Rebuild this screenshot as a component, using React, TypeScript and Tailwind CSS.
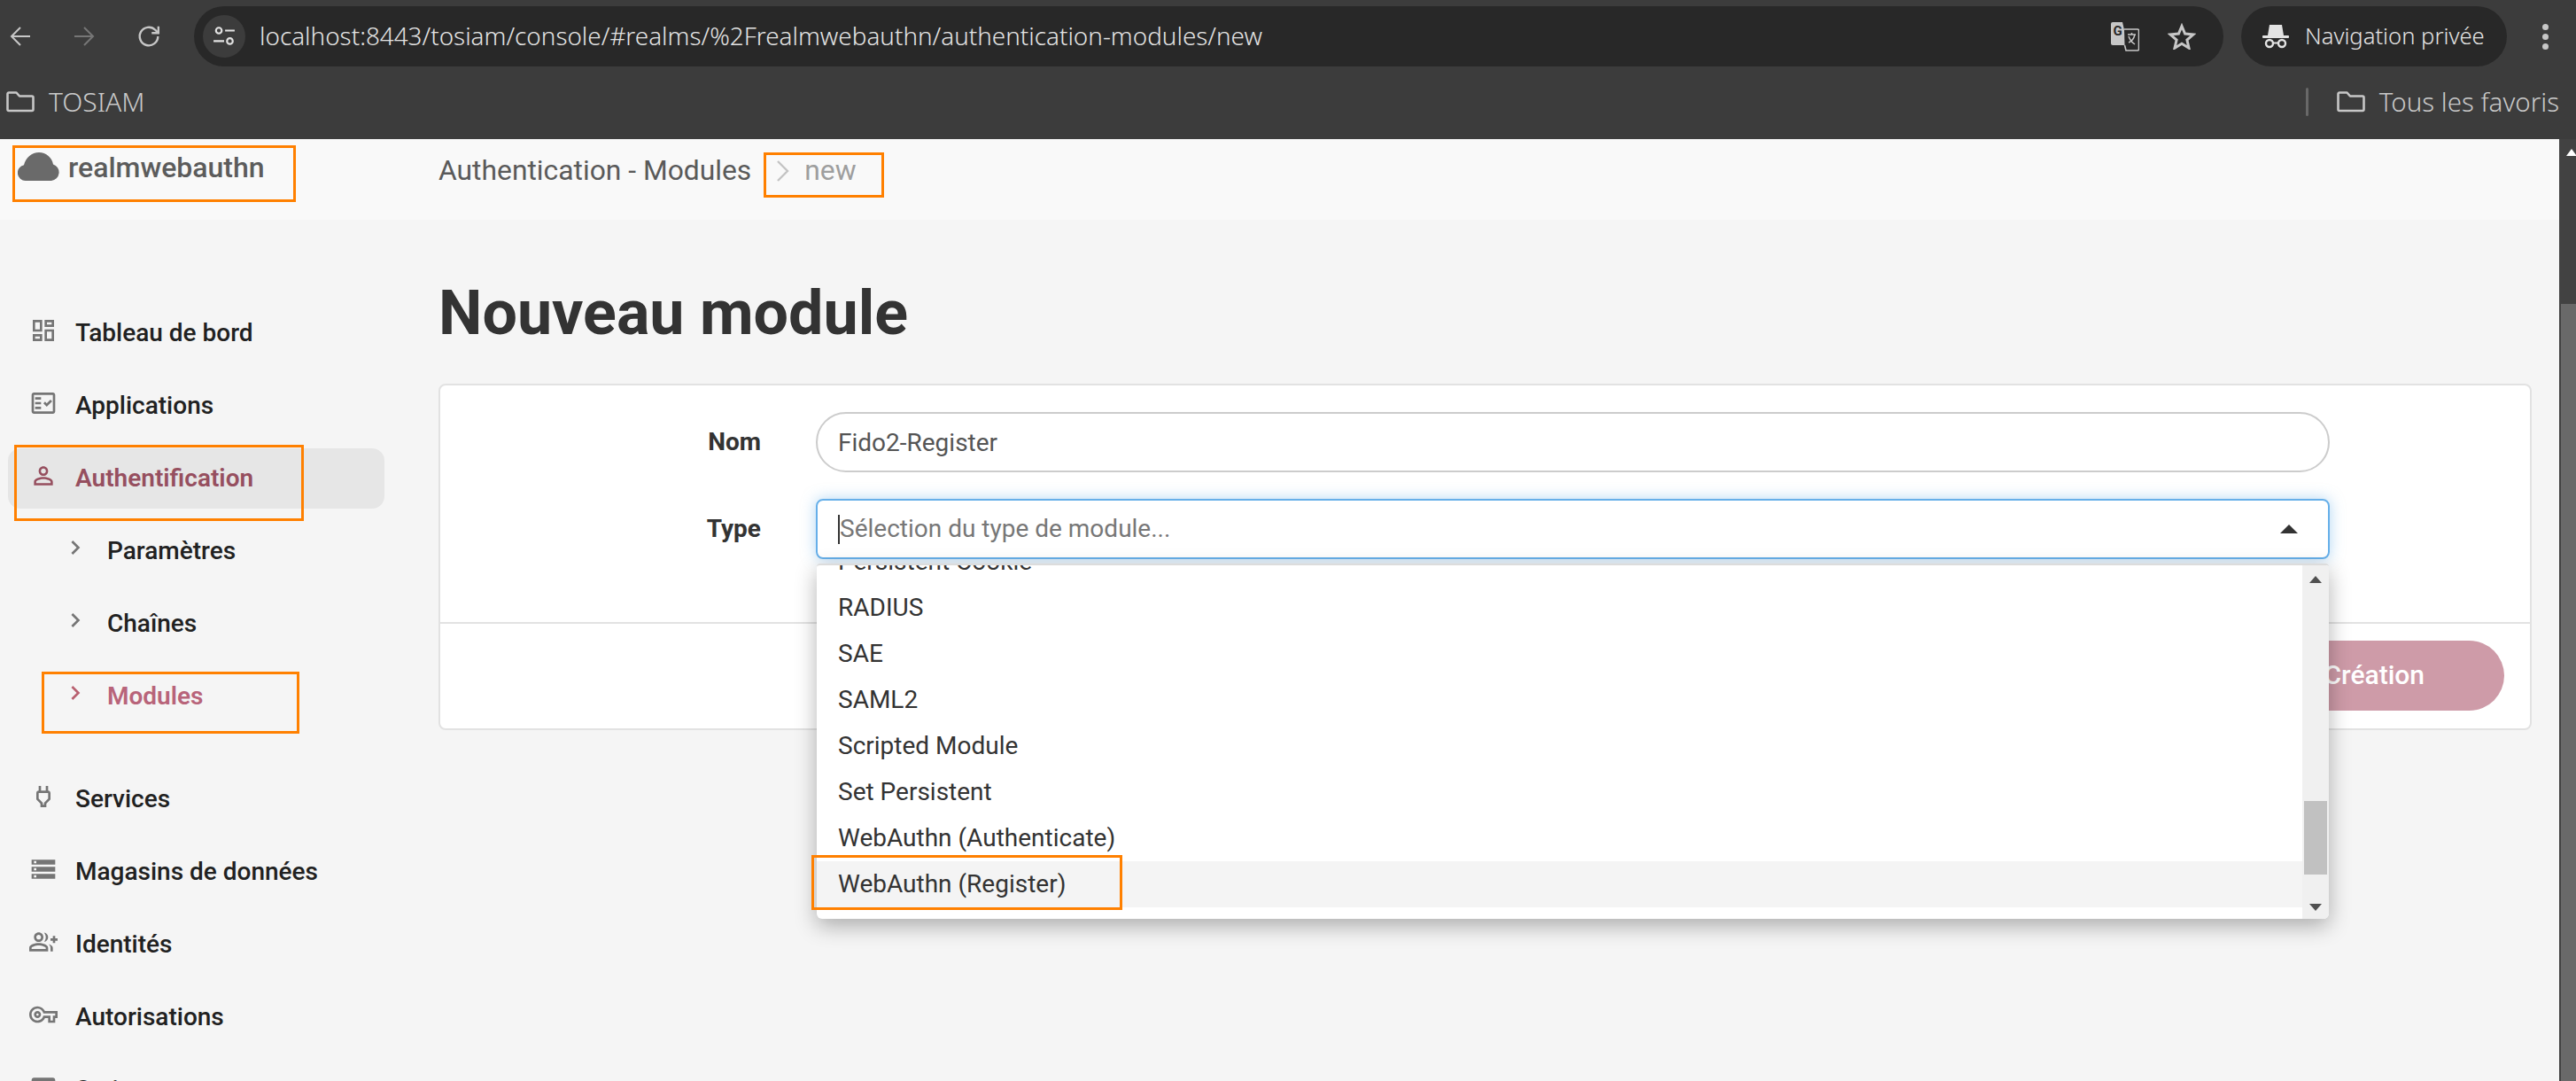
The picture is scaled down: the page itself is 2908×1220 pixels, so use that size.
import React from "react";

const P = ({ d, className }: { d: string; className: string }) => (
  <svg viewBox="0 0 24 24" className={className} fill="currentColor"><path d={d} /></svg>
);

const ICONS = {
  dashboard: "M19 5v2h-4V5h4M9 5v6H5V5h4m10 8v6h-4v-6h4M9 17v2H5v-2h4M21 3h-8v6h8V3zM11 3H3v10h8V3zm10 8h-8v10h8V11zm-10 4H3v6h8v-6z",
  fact: "M20 3H4c-1.1 0-2 .9-2 2v14c0 1.1.9 2 2 2h16c1.1 0 2-.9 2-2V5c0-1.1-.9-2-2-2zm0 16H4V5h16v14zM19.41 10.42l-1.42-1.42-3.17 3.17-1.41-1.42L12 12.16 14.82 15zM5 7h5v2H5zM5 11h5v2H5zM5 15h5v2H5z",
  person: "M12 5.9c1.16 0 2.1.94 2.1 2.1s-.94 2.1-2.1 2.1S9.9 9.16 9.9 8s.94-2.1 2.1-2.1m0 9c2.97 0 6.1 1.46 6.1 2.1v1.1H5.9V17c0-.64 3.13-2.1 6.1-2.1M12 4C9.79 4 8 5.79 8 8s1.79 4 4 4 4-1.79 4-4-1.79-4-4-4zm0 9c-2.67 0-8 1.34-8 4v3h16v-3c0-2.66-5.33-4-8-4z",
  power: "M16 9v4.66l-3.5 3.51V19h-1v-1.83L8 13.65V9h8m0-6h-2v4h-4V3H8v4h-.01C6.9 7 6 7.9 6 8.99v5.49L9.5 18v3h5v-3l3.5-3.51V9c0-1.1-.9-2-2-2V3z",
  storage: "M2 20h20v-4H2v4zm2-3h2v2H4v-2zM2 4v4h20V4H2zm4 3H4V5h2v2zm-4 7h20v-4H2v4zm2-3h2v2H4v-2z",
  group: "M22 9V7h-2v2h-2v2h2v2h2v-2h2V9zM8 12c2.21 0 4-1.79 4-4s-1.79-4-4-4-4 1.79-4 4 1.79 4 4 4zm0-6c1.1 0 2 .9 2 2s-.9 2-2 2-2-.9-2-2 .9-2 2-2zM8 13c-2.67 0-8 1.34-8 4v3h16v-3c0-2.66-5.33-4-8-4zm6 5H2v-.99C2.2 16.29 5.3 15 8 15s5.8 1.29 6 2v1zM12.51 4.05C13.43 5.11 14 6.49 14 8s-.57 2.89-1.49 3.95C14.47 11.7 16 10.04 16 8s-1.53-3.7-3.49-3.95zM16.53 13.83C17.42 14.66 18 15.7 18 17v3h2v-3c0-1.45-1.59-2.51-3.47-3.17z",
  key: "M22 19h-6v-4h-2.68c-1.14 2.42-3.6 4-6.32 4-3.86 0-7-3.14-7-7s3.14-7 7-7c2.72 0 5.17 1.58 6.32 4H24v6h-2v4zm-4-2h2v-4h2v-2H11.94l-.23-.67C11.01 8.34 9.11 7 7 7c-2.76 0-5 2.24-5 5s2.24 5 5 5c2.11 0 4.01-1.34 4.71-3.33l.23-.67H18v4zM7 15c-1.65 0-3-1.35-3-3s1.35-3 3-3 3 1.35 3 3-1.35 3-3 3zm0-4c-.55 0-1 .45-1 1s.45 1 1 1 1-.45 1-1-.45-1-1-1z",
  web: "M20 4H4c-1.1 0-2 .9-2 2v12c0 1.1.9 2 2 2h16c1.1 0 2-.9 2-2V6c0-1.1-.9-2-2-2zm0 14H4V8h16v10z",
  chevron: "M10 6L8.59 7.41 13.17 12l-4.58 4.59L10 18l6-6z",
};

const Folder = ({ className }: { className: string }) => (
  <svg viewBox="0 0 32 24" className={className} fill="none" stroke="#c7c7c7" strokeWidth="2.6" strokeLinejoin="round">
    <path d="M1.5 3a1.5 1.5 0 0 1 1.5-1.5h8.5l3.5 4h14a1.5 1.5 0 0 1 1.5 1.5v13.5a1.5 1.5 0 0 1-1.5 1.5H3a1.5 1.5 0 0 1-1.5-1.5z" />
  </svg>
);

function NavRow({ icon, label, active }: { icon: string; label: string; active?: boolean }) {
  return (
    <div className={`flex h-[68px] w-[425px] items-center gap-[20px] rounded-[14px] pl-[24px] mb-[14px] ${active ? "bg-[#e6e6e6]" : ""}`}>
      <P d={icon} className={`mb-[6px] h-[32px] w-[32px] shrink-0 ${active ? "text-[#964f5f]" : "text-[#757575]"}`} />
      <span className={`text-[28px] font-medium ${active ? "font-semibold text-[#964f5f]" : "text-[#212121]"}`}>{label}</span>
    </div>
  );
}

function SubRow({ label, active }: { label: string; active?: boolean }) {
  return (
    <div className="flex h-[68px] w-[425px] items-center gap-[20px] pl-[60px] mb-[14px]">
      <P d={ICONS.chevron} className={`mb-[8px] h-[32px] w-[32px] shrink-0 ${active ? "text-[#b8606f]" : "text-[#757575]"}`} />
      <span className={`text-[28px] font-medium ${active ? "font-semibold text-[#b8647a]" : "text-[#212121]"}`}>{label}</span>
    </div>
  );
}

const Box = ({ className }: { className: string }) => (
  <div className={`absolute z-30 border-[3px] border-[#ff8000] ${className}`} />
);

const ITEMS = ["Persistent Cookie", "RADIUS", "SAE", "SAML2", "Scripted Module", "Set Persistent", "WebAuthn (Authenticate)", "WebAuthn (Register)"];

export default function App() {
  return (
    <div className="relative h-[1220px] w-[2908px] overflow-hidden bg-[#f5f5f5] font-[Roboto,sans-serif]">
      {/* browser chrome */}
      <div className="h-[157px] bg-[#3c3c3c] font-['Noto_Sans',sans-serif] text-[#e3e3e3]">
        <div className="flex h-[82px] items-center py-[7px]">
          <div className="flex w-[219px] shrink-0 items-center gap-[48px] pl-[11px]">
            <svg viewBox="0 0 24 24" className="h-[24px] w-[24px]" fill="none" stroke="#c7c7c7" strokeWidth="2"><path d="M23 12H2M12 2 2 12l10 10" /></svg>
            <svg viewBox="0 0 24 24" className="h-[24px] w-[24px]" fill="none" stroke="#767676" strokeWidth="2"><path d="M1 12h21M12 2l10 10-10 10" /></svg>
            <svg viewBox="0 0 24 24" className="h-[26px] w-[26px]" fill="none" stroke="#c7c7c7" strokeWidth="2.2"><path d="M21.5 12a9.5 9.5 0 1 1-2.8-6.7L22 8.5" /><path d="M22 1.5v7h-7" /></svg>
          </div>
          <div className="flex h-[68px] w-[2291px] items-center rounded-full bg-[#282828] pl-[10px]">
            <div className="flex h-[48px] w-[48px] shrink-0 items-center justify-center rounded-full bg-[#3c3c3c]">
              <svg viewBox="0 0 24 24" className="h-[26px] w-[26px]" fill="none" stroke="#e3e3e3" strokeWidth="2"><circle cx="6.5" cy="6" r="3" /><path d="M13 6h10M1 17h11" /><circle cx="18" cy="17" r="3" /></svg>
            </div>
            <span className="ml-[16px] whitespace-nowrap text-[27.85px] leading-none font-light">localhost:8443/tosiam/console/#realms/%2Frealmwebauthn/authentication-modules/new</span>
            <svg viewBox="0 0 32 33" className="ml-auto h-[33px] w-[32px] shrink-0">
              <path d="M2 0h11l6 26H2a2 2 0 0 1-2-2V2a2 2 0 0 1 2-2z" fill="#c7c7c7" />
              <text x="2.5" y="15" fontSize="15" fontWeight="700" fill="#282828" fontFamily="Roboto, sans-serif">G</text>
              <path d="M15 8h15a1.5 1.5 0 0 1 1.5 1.5v21a1.5 1.5 0 0 1-1.5 1.5H17l-1.500-6" fill="#282828" stroke="#c7c7c7" strokeWidth="1.6" />
              <path d="M19 14h9M23.500 12v2M27 14c-1 4-4 8-7 9M20 16c1 3 4 7 7 9" fill="none" stroke="#c7c7c7" strokeWidth="1.500" />
            </svg>
            <svg viewBox="0 0 32 30" className="ml-[32px] mr-[31px] h-[30px] w-[32px] shrink-0" fill="none" stroke="#c7c7c7" strokeWidth="3" strokeLinejoin="miter"><path d="M16 3.500l3.600 8.600 9.400.8-7.100 6.100 2.100 9.200L16 23.300l-8 4.900 2.100-9.200L3 12.900l9.400-.8z" /></svg>
          </div>
          <div className="ml-[20px] flex h-[68px] w-[300px] items-center rounded-full bg-[#282828] pl-[24px]">
            <svg viewBox="0 0 30 28" className="h-[28px] w-[30px] shrink-0" fill="#e3e3e3">
              <path d="M6 13 8 1h14l2 12z" /><rect x="0" y="13" width="30" height="3" rx="1" />
              <circle cx="8" cy="22" r="4" fill="none" stroke="#e3e3e3" strokeWidth="2.400" /><circle cx="22" cy="22" r="4" fill="none" stroke="#e3e3e3" strokeWidth="2.400" /><rect x="11" y="20.500" width="8" height="2" />
            </svg>
            <span className="ml-[18px] whitespace-nowrap text-[25.6px] leading-none font-light">Navigation privée</span>
          </div>
          <div className="ml-[40px] flex flex-col gap-[4px]">
            <div className="h-[7px] w-[7px] rounded-full bg-[#c7c7c7]" />
            <div className="h-[7px] w-[7px] rounded-full bg-[#c7c7c7]" />
            <div className="h-[7px] w-[7px] rounded-full bg-[#c7c7c7]" />
          </div>
        </div>
        <div className="flex h-[75px] items-center pb-[10px] pl-[7px] pr-[19px] text-[#c9c9c9]">
          <Folder className="h-[24px] w-[32px]" />
          <span className="ml-[16px] text-[30px] leading-none font-light">TOSIAM</span>
          <div className="ml-auto h-[32px] w-[3px] rounded-full bg-[#686868]" />
          <Folder className="ml-[32px] h-[24px] w-[32px]" />
          <span className="ml-[16px] whitespace-nowrap text-[29.5px] leading-none font-light">Tous les favoris</span>
        </div>
      </div>

      <div className="flex h-[1063px]">
        <div className="flex min-w-0 flex-1 flex-col">
          {/* header */}
          <div className="flex h-[91px] shrink-0 bg-[#f9f9f9]">
            <div className="flex w-[495px] shrink-0 items-start pl-[20px] pt-[15px]">
              <svg viewBox="0 0 48 32" className="h-[32px] w-[48px]" fill="#6a6a6a"><path d="M38 32H9a9 9 0 0 1-2-17.800C9 6 16 0 24 0c8 0 15 6 16 13.500A9.500 9.500 0 0 1 38 32z" /></svg>
              <span className="ml-[9px] text-[32px] leading-[34px] font-medium text-[#5c5c5c]">realmwebauthn</span>
            </div>
            <div className="flex items-start pt-[16px] text-[31.8px] leading-[38px]">
              <span className="text-[#5a5a5a]">Authentication - Modules</span>
              <svg viewBox="0 0 16 24" className="ml-[28px] mt-[8px] h-[24px] w-[16px]" fill="none" stroke="#c4c4c4" strokeWidth="2.4"><path d="M2 1l11 11L2 23" /></svg>
              <span className="ml-[16px] text-[#9e9e9e]">new</span>
            </div>
          </div>
          {/* body */}
          <div className="flex min-h-0 flex-1 overflow-hidden">
            <nav className="w-[495px] shrink-0 pl-[9px] pt-[94px]">
              <NavRow icon={ICONS.dashboard} label="Tableau de bord" />
              <NavRow icon={ICONS.fact} label="Applications" />
              <NavRow icon={ICONS.person} label="Authentification" active />
              <SubRow label="Paramètres" />
              <SubRow label="Chaînes" />
              <SubRow label="Modules" active />
              <div className="h-[34px]" />
              <NavRow icon={ICONS.power} label="Services" />
              <NavRow icon={ICONS.storage} label="Magasins de données" />
              <NavRow icon={ICONS.group} label="Identités" />
              <NavRow icon={ICONS.key} label="Autorisations" />
              <NavRow icon={ICONS.web} label="Scripts" />
            </nav>
            <main className="w-[2363px] shrink-0">
              <h1 className="mt-[65px] h-[120px] text-[70px] leading-[80px] font-bold text-[#333333]">Nouveau module</h1>
              <div className="rounded-[8px] border-2 border-[#e2e2e2] bg-white">
                <div className="flex h-[267px] flex-col gap-[30px] pt-[30px]">
                  <div className="flex h-[68px] items-center gap-[62px]">
                    <label className="w-[362px] text-right text-[28px] font-bold text-[#333333]">Nom</label>
                    <div className="flex h-[68px] w-[1709px] items-center rounded-full border-2 border-[#cccccc] pl-[23px] pt-[2px] text-[28px] text-[#555555]">Fido2-Register</div>
                  </div>
                  <div className="flex h-[68px] items-center gap-[62px]">
                    <label className="w-[362px] text-right text-[28px] font-bold text-[#333333]">Type</label>
                    <div className="relative w-[1709px]">
                      <div className="flex h-[68px] items-center rounded-[8px] border-2 border-[#66afe9] pl-[23px] text-[28px] text-[#777777] shadow-[0_0_16px_rgba(102,175,233,0.5)]">
                        <span className="h-[33px] w-[2px] bg-[#333333]" />
                        <span>Sélection du type de module...</span>
                        <svg viewBox="0 0 20 10" className="ml-auto mr-[34px] h-[10px] w-[20px]" fill="#333333"><path d="M10 0l10 10H0z" /></svg>
                      </div>
                      {/* open list */}
                      <div className="absolute left-[1px] top-[73px] z-20 flex h-[401px] w-[1707px] overflow-hidden rounded-b-[6px] rounded-t-[4px] border-t-2 border-[#dcdcdc] bg-white shadow-[0_8px_24px_rgba(0,0,0,0.3)]">
                        <ul className="mt-[-30px] min-w-0 flex-1">
                          {ITEMS.map((t) => (
                            <li key={t} className={`flex h-[52px] items-center pl-[24px] text-[28px] text-[#333333] ${t === "WebAuthn (Register)" ? "bg-[#f4f4f4]" : ""}`}>{t}</li>
                          ))}
                        </ul>
                        <div className="flex w-[30px] shrink-0 flex-col items-center bg-[#f0f0f0] pt-[12px]">
                          <svg viewBox="0 0 14 8" className="h-[8px] w-[14px]" fill="#505050"><path d="M7 0l7 8H0z" /></svg>
                          <div className="mt-[246px] h-[83px] w-[26px] shrink-0 bg-[#c1c1c1]" />
                          <svg viewBox="0 0 14 8" className="mt-[33px] h-[8px] w-[14px]" fill="#505050"><path d="M7 8l7-8H0z" /></svg>
                        </div>
                      </div>
                    </div>
                  </div>
                </div>
                <div className="flex h-[120px] items-center justify-end border-t-2 border-[#e2e2e2] pr-[29px] pb-[1px]">
                  <div className="flex h-[79px] items-center rounded-full bg-[#ce9ba8] px-[90px] pb-[2px] text-[30px] font-medium text-white">Création</div>
                </div>
              </div>
            </main>
          </div>
        </div>
        {/* page scrollbar */}
        <div className="flex w-[19px] shrink-0 flex-col bg-[#424242] pl-[2px]">
          <div className="h-[186px] shrink-0">
            <svg viewBox="0 0 12 8" className="ml-[6px] mt-[11px] h-[8px] w-[12px]" fill="#ffffff"><path d="M6 0l6 8H0z" /></svg>
          </div>
          <div className="flex-1 bg-[#696969]" />
        </div>
      </div>

      {/* orange annotations drawn over the screenshot */}
      <Box className="left-[14px] top-[164px] h-[64px] w-[320px]" />
      <Box className="left-[862px] top-[172px] h-[51px] w-[136px]" />
      <Box className="left-[16px] top-[502px] h-[86px] w-[327px]" />
      <Box className="left-[47px] top-[758px] h-[70px] w-[291px]" />
      <Box className="left-[916px] top-[965px] h-[62px] w-[351px]" />
    </div>
  );
}
